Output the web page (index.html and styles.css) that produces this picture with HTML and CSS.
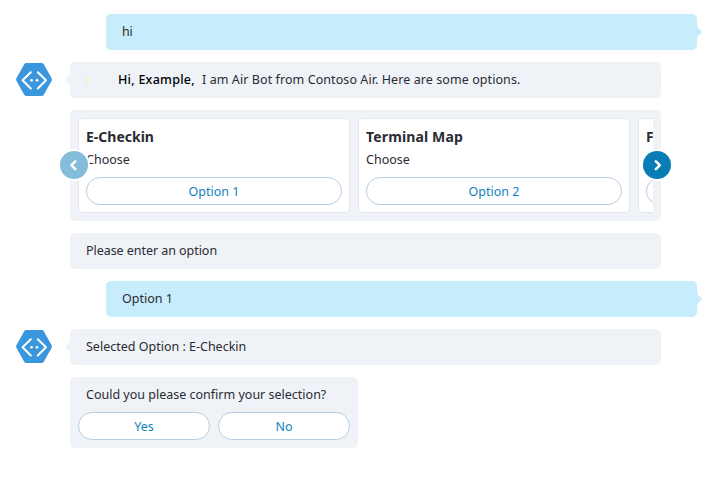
FILE: index.html
```html
<!DOCTYPE html>
<html lang="en">
<head>
<meta charset="utf-8">
<title>Air Bot</title>
<link rel="stylesheet" href="styles.css">
</head>
<body>
<svg class="defs" width="0" height="0">
  <symbol id="bot" viewBox="0 0 36 33">
    <path d="M10.500 0h15q1.500 0 2.300 1.300l7.700 13.700q.8 1.500 0 3l-7.700 13.700q-.8 1.300-2.300 1.300h-15q-1.500 0-2.300-1.300L.5 18q-.8-1.500 0-3L8.200 1.300Q9 0 10.500 0z" fill="#3a96dd"/>
    <path d="M14.800 9.200 6.600 17.300l8.200 8.200M21.800 9.200l8.200 8.100-8.200 8.200" fill="none" stroke="#fff" stroke-width="2" stroke-linecap="round" stroke-linejoin="round"/>
    <circle cx="15.500" cy="17.300" r="1.400" fill="#fff"/>
    <circle cx="21" cy="17.300" r="1.400" fill="#fff"/>
  </symbol>
  <symbol id="tail" viewBox="0 0 5 16">
    <path d="M5 0Q5 2.500 3.500 4.500L.5 7.200Q0 8 .5 8.800L3.500 11.500Q5 13.500 5 16z" fill="currentColor"/>
  </symbol>
</svg>
<main class="chat">
  <div class="bubble user"><span class="hi">hi</span><svg class="tail"><use href="#tail"/></svg></div>
  <div class="bubble bot">
    <svg class="avatar"><use href="#bot"/></svg><svg class="tail"><use href="#tail"/></svg>
    <i class="cursor"></i><span class="name">Hi, Example,</span><span class="intro">I am Air Bot from Contoso Air. Here are some options.</span>
  </div>
  <section class="carousel">
    <div class="track">
      <article class="card"><h2>E-Checkin</h2><p>Choose</p><button>Option 1</button></article>
      <article class="card"><h2 class="wide">Terminal Map</h2><p>Choose</p><button>Option 2</button></article>
      <article class="card"><h2>F</h2><p>&nbsp;</p><button></button></article>
    </div>
    <span class="nav prev"><svg viewBox="0 0 28 28"><path d="M15.300 10.300 11.400 14.200l3.900 3.900"/></svg></span>
    <span class="nav next"><svg viewBox="0 0 28 28"><path d="M12.900 10.300 16.800 14.200l-3.900 3.900"/></svg></span>
  </section>
  <div class="bubble bot"><span class="enter">Please enter an option</span></div>
  <div class="bubble user"><span>Option 1</span><svg class="tail"><use href="#tail"/></svg></div>
  <div class="bubble bot">
    <svg class="avatar"><use href="#bot"/></svg><svg class="tail"><use href="#tail"/></svg>
    <span>Selected Option : E-Checkin</span>
  </div>
  <section class="confirm">
    <p>Could you please confirm your selection?</p>
    <div class="choices"><button>Yes</button><button>No</button></div>
  </section>
</main>
</body>
</html>
```
FILE: styles.css
```css
* { box-sizing: border-box; }
body {
  margin: 0;
  background: #fff;
  color: #2b2b33;
  font: 12.5px/20px "Noto Sans", "Open Sans", sans-serif;
  overflow: hidden;
}
.defs { position: absolute; }
.chat {
  display: flex;
  flex-direction: column;
  align-items: flex-start;
  gap: 12px;
  padding: 14px 0 0 70px;
}
.bubble {
  position: relative;
  display: flex;
  align-items: center;
  width: 591px;
  height: 36px;
  padding: 0 16px;
  border-radius: 5px;
  white-space: nowrap;
}
.user { margin-left: 36px; background: #c7ecfc; }
.bot { background: #eff2f7; }
.avatar { position: absolute; left: -54px; top: 1px; width: 36px; height: 33px; }
.tail { position: absolute; left: -5px; top: 10px; width: 5px; height: 16px; color: #eff2f7; }
.user .tail { left: auto; right: -5px; color: #c7ecfc; transform: scaleX(-1); }
.hi { letter-spacing: -.3px; }
.cursor { width: 1px; height: 9px; background: #f0f59c; margin-right: 31px; }
.name { color: #000; font-weight: 500; width: 84px; letter-spacing: .25px; }
.intro { letter-spacing: .08px; }
.enter { letter-spacing: -.05px; }
.carousel {
  position: relative;
  width: 591px;
  height: 111px;
  padding: 8px;
  border-radius: 5px;
  background: #eff2f7;
}
.track { display: flex; gap: 8px; overflow: hidden; }
.card {
  flex: 0 0 272px;
  height: 95px;
  padding: 7px;
  border: 1px solid #e3e5e8;
  border-radius: 5px;
  background: #fff;
}
h2 { margin: 0; font-size: 14px; line-height: 22px; font-weight: 700; }
.wide { letter-spacing: .14px; }
p { margin: 0; }
.card p { height: 20px; margin: 1px 0 8px; line-height: 21px; }
button {
  display: block;
  width: 100%;
  height: 28px;
  padding: 2px 0 0;
  border: 1px solid #b9cbde;
  border-radius: 14px;
  background: #fff;
  color: #1482bd;
  font: inherit;
  line-height: 24px;
}
.nav {
  position: absolute;
  top: 41px;
  width: 28px;
  height: 28px;
  border-radius: 50%;
  box-shadow: 0 0 0 2px #fff;
}
.nav svg { display: block; fill: none; stroke: #fff; stroke-width: 2.600; stroke-linecap: round; stroke-linejoin: round; }
.prev { left: -10px; background: #83bdd9; }
.next { right: -10px; background: #087db5; }
.confirm {
  width: 288px;
  height: 71px;
  padding: 8px;
  border-radius: 5px;
  background: #eff2f7;
}
.confirm p { padding-left: 8px; margin-bottom: 7px; white-space: nowrap; }
.choices { display: flex; gap: 8px; }
```
